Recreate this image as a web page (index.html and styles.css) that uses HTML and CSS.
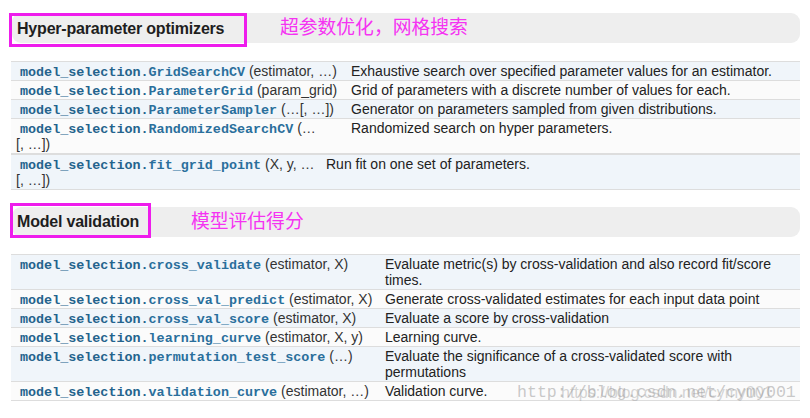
FILE: index.html
```html
<!DOCTYPE html>
<html lang="en">
<head>
<meta charset="utf-8">
<title>model_selection</title>
<link rel="stylesheet" href="styles.css">
</head>
<body>
<div class="page">
  <div class="sec-head">
    <h2 class="mark mark--one">Hyper-parameter optimizers</h2>
    <span class="note note--one">超参数优化，网格搜索</span>
  </div>

  <table class="api api--first">
    <colgroup><col class="c1 c1--a"><col></colgroup>
    <tbody>
      <tr><td><code class="fn"><span class="mod">model_selection.</span>GridSearchCV</code> <span class="args">(estimator, …)</span></td><td>Exhaustive search over specified parameter values for an estimator.</td></tr>
      <tr><td><code class="fn"><span class="mod">model_selection.</span>ParameterGrid</code> <span class="args">(param_grid)</span></td><td>Grid of parameters with a discrete number of values for each.</td></tr>
      <tr><td><code class="fn"><span class="mod">model_selection.</span>ParameterSampler</code> <span class="args">(…[, …])</span></td><td>Generator on parameters sampled from given distributions.</td></tr>
      <tr><td><code class="fn"><span class="mod">model_selection.</span>RandomizedSearchCV</code> <span class="args">(…<br>[, …])</span></td><td>Randomized search on hyper parameters.</td></tr>
    </tbody>
  </table>
  <table class="api">
    <colgroup><col class="c1 c1--b"><col></colgroup>
    <tbody>
      <tr><td><code class="fn"><span class="mod">model_selection.</span>fit_grid_point</code> <span class="args">(X, y, …<br>[, …])</span></td><td>Run fit on one set of parameters.</td></tr>
    </tbody>
  </table>

  <div class="sec-head sec-head--two">
    <h2 class="mark mark--two">Model validation</h2>
    <span class="note note--two">模型评估得分</span>
  </div>

  <table class="api">
    <colgroup><col class="c1 c1--c"><col></colgroup>
    <tbody>
      <tr><td><code class="fn"><span class="mod">model_selection.</span>cross_validate</code> <span class="args">(estimator, X)</span></td><td>Evaluate metric(s) by cross-validation and also record fit/score<br>times.</td></tr>
      <tr><td><code class="fn"><span class="mod">model_selection.</span>cross_val_predict</code> <span class="args">(estimator, X)</span></td><td>Generate cross-validated estimates for each input data point</td></tr>
      <tr><td><code class="fn"><span class="mod">model_selection.</span>cross_val_score</code> <span class="args">(estimator, X)</span></td><td>Evaluate a score by cross-validation</td></tr>
      <tr><td><code class="fn"><span class="mod">model_selection.</span>learning_curve</code> <span class="args">(estimator, X, y)</span></td><td>Learning curve.</td></tr>
      <tr><td><code class="fn"><span class="mod">model_selection.</span>permutation_test_score</code> <span class="args">(…)</span></td><td>Evaluate the significance of a cross-validated score with<br>permutations</td></tr>
      <tr><td><code class="fn"><span class="mod">model_selection.</span>validation_curve</code> <span class="args">(estimator, …)</span></td><td>Validation curve.</td></tr>
    </tbody>
  </table>

  <div class="watermark" aria-hidden="true">
    <span class="wm wm--mono">http://blog.csdn.net/cymy001</span>
    <span class="wm wm--sans">https://blog.csdn.net/cymy001</span>
  </div>
</div>
</body>
</html>
```

FILE: styles.css
```css
html, body {
  margin: 0;
  padding: 0;
  background: #ffffff;
}

body {
  font-family: "Liberation Sans", Arial, sans-serif;
  color: #222222;
}

.page {
  position: relative;
  height: 418px;
  box-sizing: border-box;
  padding: 13px 10px 0 11px;
  border-left: 3px solid #f6f6f6;
  margin-left: -3px;
  width: 813px;
}

/* ---------- section headers ---------- */
.sec-head {
  display: flex;
  align-items: flex-start;
  height: 30px;
  margin-left: 1px;
  background: #eeeeee;
  border-radius: 9px;
}

.sec-head--two {
  margin-top: 17px;
}

.mark {
  margin: 0;
  box-sizing: border-box;
  border: 3px solid #ee1cec;
  font-size: 16px;
  line-height: 20px;
  font-weight: 700;
  letter-spacing: -0.2px;
  color: #1e1e1e;
  white-space: nowrap;
  flex: none;
}

.mark--one {
  width: 238px;
  height: 34px;
  margin-left: -3px;
  padding: 3px 0 0 5px;
}

.mark--two {
  width: 141px;
  height: 35px;
  margin-left: -2px;
  margin-top: -4px;
  padding: 6px 0 0 4px;
}

.note {
  font-family: "Noto Sans CJK SC", "Noto Sans CJK JP", sans-serif;
  font-size: 18.8px;
  line-height: 26px;
  color: #f533f2;
  white-space: nowrap;
}

.note--one {
  margin-left: 33px;
}

.note--two {
  margin-left: 40px;
  margin-top: 0;
}

/* ---------- api tables ---------- */
.api {
  width: 789px;
  table-layout: fixed;
  border-collapse: separate;
  border-spacing: 0;
  border-top: 1px solid #dddddd;
}

.api--first {
  margin-top: 18px;
}

.sec-head--two + .api {
  margin-top: 17px;
}

.c1--a { width: 335px; }
.c1--b { width: 310px; }
.c1--c { width: 369px; }

.api td {
  padding: 1px 0 1px 5px;
  vertical-align: top;
  font-size: 14px;
  line-height: 16px;
  color: #222222;
  white-space: nowrap;
  overflow: hidden;
  border-bottom: 1px solid #dddddd;
}

.api tr:nth-child(odd) td {
  background: #f0f5fa;
}

.api tr:nth-child(even) td {
  background: #fbfbfb;
}

.fn {
  font-family: "Liberation Mono", "Courier New", monospace;
  font-weight: 700;
  font-size: 13.4px;
  line-height: 0;
  color: #2a6f9c;
  margin-left: 4px;
}

.mod {
  color: #24638d;
}

.args {
  color: #333333;
}

/* ---------- watermark overlay ---------- */
.watermark {
  position: absolute;
  left: 517px;
  top: 383px;
  width: 290px;
  height: 20px;
  pointer-events: none;
}

.wm {
  position: absolute;
  top: 0;
  left: 0;
  white-space: nowrap;
  line-height: 20px;
}

.wm--mono {
  font-family: "Liberation Mono", monospace;
  font-size: 16.6px;
  color: rgba(150, 150, 150, 0.5);
}

.wm--sans {
  left: 44px;
  font-family: "Liberation Sans", sans-serif;
  font-size: 16px;
  color: rgba(150, 150, 150, 0.4);
}
```
